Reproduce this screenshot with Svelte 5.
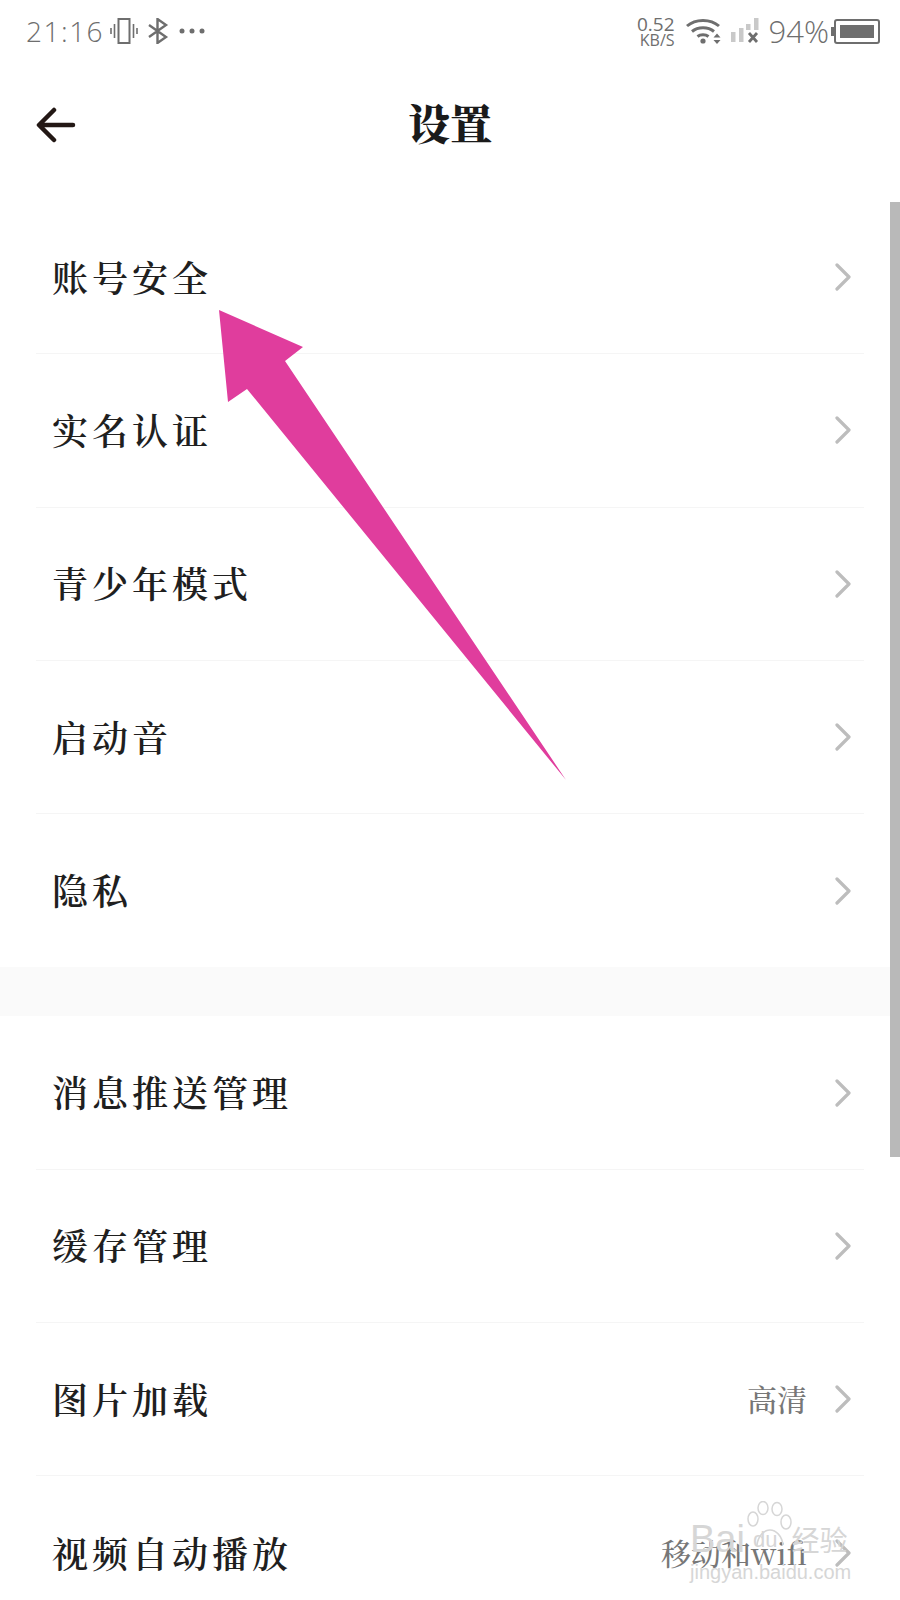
<script>
    const firstGroup = [
        {label: "账号安全"},
        {label: "实名认证"},
        {label: "青少年模式"},
        {label: "启动音"},
        {label: "隐私"}
    ];

    const secondGroup = [
        {label: "消息推送管理"},
        {label: "缓存管理"},
        {label: "图片加载", value: "高清"},
        {label: "视频自动播放", value: "移动和wifi"}
    ];

    const groups = [firstGroup, secondGroup];
</script>

<div class="page">
    <div class="status">
        <div class="status-left">
            <span class="clock">21:16</span>
            <svg class="vibrate" width="28" height="28" viewBox="0 0 28 28" fill="none" stroke="#6e6e6e">
                <rect x="8.5" y="2" width="11" height="24" stroke-width="2"/>
                <path d="M4.5 7v14M1 11v6M23.500 7v14M27 11v6" stroke-width="1.600"/>
            </svg>
            <svg class="bt" width="22" height="26" viewBox="0 0 22 26" fill="none" stroke="#6e6e6e" stroke-width="2.400">
                <path d="M2 7l17 12-8.500 6V1L19 7 2 19"/>
            </svg>
            <svg class="dots" width="26" height="6" viewBox="0 0 26 6" fill="#6e6e6e">
                <circle cx="3" cy="3" r="2.500"/><circle cx="13" cy="3" r="2.500"/><circle cx="23" cy="3" r="2.500"/>
            </svg>
        </div>
        <div class="status-right">
            <div class="speed"><span>0.52</span><span class="unit">KB/S</span></div>
            <svg class="wifi" width="36" height="26" viewBox="0 0 36 26" fill="none" stroke="#6e6e6e" stroke-width="3">
                <path d="M1 8c8.500-7.500 23.500-7.500 32 0M6 13.500c6-5 16-5 22 0M11.500 18.500c3-2.400 8-2.400 11 0"/>
                <circle cx="17" cy="23" r="2.600" fill="#6e6e6e" stroke="none"/>
                <path d="M31 15.500l3.500 4h-7zM31 26l3.500-4h-7z" fill="#6e6e6e" stroke="none"/>
            </svg>
            <svg class="signal" width="28" height="26" viewBox="0 0 28 26">
                <rect x="0" y="14" width="4.500" height="10" fill="#c9c9c9"/>
                <rect x="8" y="10" width="4.500" height="14" fill="#c9c9c9"/>
                <rect x="15" y="6" width="4.500" height="6" fill="#c9c9c9"/>
                <rect x="23" y="0" width="4.500" height="12" fill="#c9c9c9"/>
                <path d="M18 15l8 9M26 15l-8 9" stroke="#6e6e6e" stroke-width="2.800"/>
            </svg>
            <span class="percent">94%</span>
            <div class="battery"><span class="cap"></span><div class="shell"><div class="level"></div></div></div>
        </div>
    </div>

    <div class="header">
        <svg class="back" width="40" height="36" viewBox="0 0 40 36" fill="none" stroke="#231815" stroke-width="4.500" stroke-linecap="round" stroke-linejoin="round">
            <path d="M37 18H4M18 3L3 18l15 15"/>
        </svg>
        <h1>设置</h1>
    </div>

    {#each groups as group, g}
        {#if g > 0}
            <div class="gap"></div>
        {/if}
        <div class="group">
            {#each group as row}
                <div class="row">
                    <span class="label">{row.label}</span>
                    {#if row.value}
                        <span class="value">{row.value}</span>
                    {/if}
                    <svg class="chev" width="16" height="28" viewBox="0 0 16 28" fill="none" stroke="#bdbdbd" stroke-width="3.200" stroke-linecap="round" stroke-linejoin="round">
                        <path d="M2 2l12 12L2 26"/>
                    </svg>
                </div>
            {/each}
        </div>
    {/each}

    <div class="scrollbar"></div>

    <svg class="annotation" width="900" height="1600" viewBox="0 0 900 1600">
        <polygon points="219,310 303,347 285,361 566,780 247,389 228,402" fill="#e03d9d"/>
    </svg>

    <div class="watermark">
        <div class="brand">
            <span class="bai">Bai</span>
            <svg class="paw" width="48" height="46" viewBox="0 0 48 46" fill="none" stroke="#d6d6d6" stroke-width="1.500">
                <ellipse cx="8" cy="18" rx="5" ry="7"/>
                <ellipse cx="18" cy="7" rx="5" ry="6.500"/>
                <ellipse cx="32" cy="8" rx="5" ry="6.500"/>
                <ellipse cx="41" cy="21" rx="5" ry="7"/>
                <path d="M12 44c1-9 7-15 13-15s12 6 13 15"/>
            </svg>
            <span class="du">du</span>
            <span class="cn">经验</span>
        </div>
        <div class="site">jingyan.baidu.com</div>
    </div>
</div>

<style>
    :global(body) {
        margin: 0;
        background: #fff;
    }

    .page {
        position: relative;
        width: 900px;
        height: 1600px;
        overflow: hidden;
        background: #fff;
        font-family: "Noto Serif CJK SC", "Noto Sans CJK SC", serif;
    }

    .status {
        display: flex;
        justify-content: space-between;
        align-items: center;
        height: 62px;
        padding: 0 20px 0 26px;
        color: #6e6e6e;
        font-family: "Open Sans", sans-serif;
        font-weight: 300;
    }

    .status-left,
    .status-right {
        display: flex;
        align-items: center;
    }

    .clock {
        font-size: 28px;
        letter-spacing: 1.500px;
        line-height: 62px;
    }

    .vibrate {
        margin-left: 6px;
    }

    .bt {
        margin-left: 9px;
    }

    .dots {
        margin-left: 10px;
    }

    .speed {
        display: flex;
        flex-direction: column;
        align-items: flex-end;
        font-size: 19px;
        line-height: 18px;
        font-weight: 400;
    }

    .speed .unit {
        font-size: 16px;
        line-height: 15px;
    }

    .wifi {
        margin-left: 11px;
    }

    .signal {
        margin-left: 9px;
    }

    .percent {
        margin-left: 10px;
        font-size: 31px;
    }

    .battery {
        display: flex;
        align-items: center;
        margin-left: 2px;
    }

    .cap {
        width: 3px;
        height: 9px;
        background: #6e6e6e;
    }

    .shell {
        box-sizing: border-box;
        width: 46px;
        height: 25px;
        padding: 4px 4px;
        border: 2.500px solid #6e6e6e;
        border-radius: 3px;
    }

    .level {
        height: 100%;
        background: #6e6e6e;
    }

    .header {
        position: relative;
        display: flex;
        justify-content: center;
        align-items: center;
        height: 124px;
        margin-bottom: 15px;
    }

    .back {
        position: absolute;
        left: 36px;
        top: 45px;
    }

    h1 {
        margin: 0;
        padding-bottom: 5px;
        font-size: 42px;
        font-weight: 900;
        color: #1a1a1a;
    }

    .row {
        display: flex;
        align-items: center;
        box-sizing: border-box;
        height: 153.300px;
        margin-left: 36px;
        margin-right: 36px;
        padding: 0 13px 0 16px;
        border-bottom: 1px solid #f5f5f5;
    }

    .row:last-child {
        border-bottom: none;
    }

    .label {
        flex: 1;
        padding-bottom: 2px;
        font-size: 36px;
        font-weight: 600;
        letter-spacing: 4px;
        color: #1f1f1f;
    }

    .value {
        margin-right: 28px;
        padding-bottom: 2px;
        font-size: 30px;
        font-weight: 500;
        color: #777;
    }

    .gap {
        height: 49px;
        background: #fafafa;
    }

    .scrollbar {
        position: absolute;
        top: 202px;
        right: 0;
        width: 10px;
        height: 955px;
        background: #b9b9b9;
    }

    .annotation {
        position: absolute;
        top: 0;
        left: 0;
    }

    .watermark {
        position: absolute;
        left: 690px;
        top: 1503px;
        width: 164px;
        color: #d6d6d6;
        font-family: "Liberation Sans", sans-serif;
    }

    .brand {
        display: flex;
        align-items: flex-end;
        height: 56px;
    }

    .bai {
        font-size: 38px;
        line-height: 40px;
    }

    .paw {
        margin-bottom: 12px;
        margin-left: 0;
    }

    .du {
        margin-left: -40px;
        margin-bottom: 2px;
        font-size: 22px;
        line-height: 34px;
    }

    .cn {
        margin-left: 14px;
        font-size: 28px;
        line-height: 40px;
        font-family: "Noto Sans CJK SC", sans-serif;
    }

    .site {
        font-size: 20px;
        line-height: 26px;
    }
</style>
